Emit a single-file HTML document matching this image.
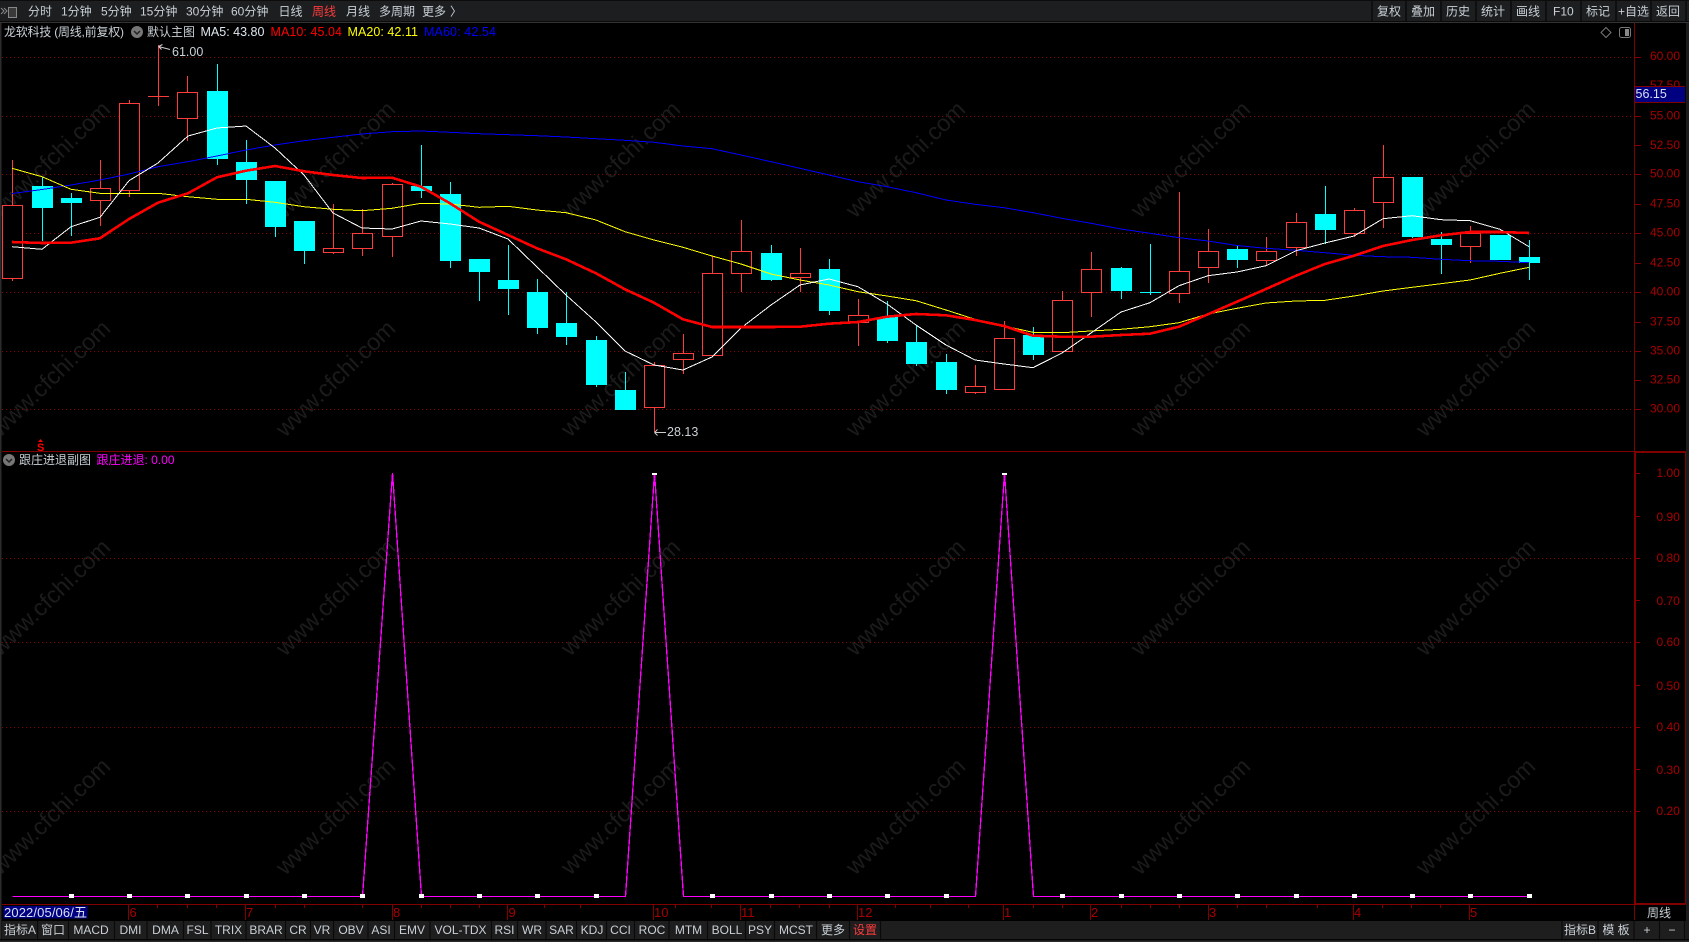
<!DOCTYPE html>
<html><head><meta charset="utf-8"><title>Chart</title>
<style>
html,body{margin:0;padding:0;background:#000;width:1689px;height:942px;overflow:hidden}
svg{position:absolute;left:0;top:0;font-family:"Liberation Sans","Noto Sans CJK SC",sans-serif;font-size:12px}
.wm text{font-size:23.5px;fill:#1b1b1b;text-anchor:middle}
.ax text{fill:#a80000}
.t text{fill:#c9d0d6}
.c text{fill:#c9d0d6;text-anchor:middle}
</style></head><body>
<svg width="1689" height="942" viewBox="0 0 1689 942" xmlns="http://www.w3.org/2000/svg">
<rect width="1689" height="942" fill="#000"/>
<g class="wm">
<text transform="translate(56,165) rotate(-44)">www.cfchi.com</text><text transform="translate(341,165) rotate(-44)">www.cfchi.com</text><text transform="translate(626,165) rotate(-44)">www.cfchi.com</text><text transform="translate(911,165) rotate(-44)">www.cfchi.com</text><text transform="translate(1196,165) rotate(-44)">www.cfchi.com</text><text transform="translate(1481,165) rotate(-44)">www.cfchi.com</text>
<text transform="translate(56,384) rotate(-44)">www.cfchi.com</text><text transform="translate(341,384) rotate(-44)">www.cfchi.com</text><text transform="translate(626,384) rotate(-44)">www.cfchi.com</text><text transform="translate(911,384) rotate(-44)">www.cfchi.com</text><text transform="translate(1196,384) rotate(-44)">www.cfchi.com</text><text transform="translate(1481,384) rotate(-44)">www.cfchi.com</text>
<text transform="translate(56,603) rotate(-44)">www.cfchi.com</text><text transform="translate(341,603) rotate(-44)">www.cfchi.com</text><text transform="translate(626,603) rotate(-44)">www.cfchi.com</text><text transform="translate(911,603) rotate(-44)">www.cfchi.com</text><text transform="translate(1196,603) rotate(-44)">www.cfchi.com</text><text transform="translate(1481,603) rotate(-44)">www.cfchi.com</text>
<text transform="translate(56,822) rotate(-44)">www.cfchi.com</text><text transform="translate(341,822) rotate(-44)">www.cfchi.com</text><text transform="translate(626,822) rotate(-44)">www.cfchi.com</text><text transform="translate(911,822) rotate(-44)">www.cfchi.com</text><text transform="translate(1196,822) rotate(-44)">www.cfchi.com</text><text transform="translate(1481,822) rotate(-44)">www.cfchi.com</text>
</g>
<!-- grid -->
<path d="M2 57.5H1634M2 116.5H1634M2 174.5H1634M2 233.5H1634M2 292.5H1634M2 351.5H1634M2 409.5H1634M2 558.5H1634M2 642.5H1634M2 727.5H1634M2 811.5H1634" stroke="#8a0000" stroke-width="1" stroke-dasharray="1 3" fill="none" shape-rendering="crispEdges"/>
<!-- cyan candles -->
<path stroke="#0ff" stroke-width="1" fill="none" shape-rendering="crispEdges" d="M42.5 177V241M71.5 193V236M217.5 64V165M246.5 140V204M275.5 181V237M304.5 221V264M421.5 145V198M450.5 182V268M479.5 259V301M508.5 245V315M537.5 279V334M566.5 292V345M596.5 336V387M625.5 372V410M771.5 245V281M829.5 259V315M887.5 301V343M916.5 325V366M946.5 354V394M1033.5 327V360M1121.5 267V299M1150.5 244V295M1140 292.5H1161M1237.5 246V268M1325.5 186V244M1412.5 177V238M1441.5 232V274M1529.5 240V280"/>
<path fill="#0ff" shape-rendering="crispEdges" d="M32 186h21v22h-21zM61 198h21v5h-21zM207 91h21v68h-21zM236 162h21v18h-21zM265 181h21v46h-21zM294 221h21v30h-21zM411 186h21v5h-21zM440 194h21v67h-21zM469 259h21v13h-21zM498 280h21v9h-21zM527 292h21v36h-21zM556 323h21v14h-21zM586 340h21v45h-21zM615 390h21v20h-21zM761 253h21v27h-21zM819 269h21v42h-21zM877 317h21v24h-21zM906 342h21v22h-21zM936 362h21v28h-21zM1023 335h21v20h-21zM1111 268h21v23h-21zM1227 249h21v11h-21zM1315 214h21v16h-21zM1402 177h21v60h-21zM1431 239h21v6h-21zM1490 235h21v25h-21zM1519 257h21v6h-21z"/>
<!-- red candles -->
<path stroke="#ff3c3c" stroke-width="1" fill="#000" shape-rendering="crispEdges" d="M12.5 160V205.5M12.5 278.5V281M2.5 205.5h20v73h-20zM100.5 160V188.5M100.5 200.5V226M90.5 188.5h20v12h-20zM129.5 100V103.5M129.5 190.5V197M119.5 103.5h20v87h-20zM158.5 45V106M148 96.5h21M187.5 76V92.5M187.5 118.5V141M177.5 92.5h20v26h-20zM333.5 204V248.5M333.5 252.5V254M323.5 248.5h20v4h-20zM362.5 209V233.5M362.5 248.5V256M352.5 233.5h20v15h-20zM392.5 183V184.5M392.5 236.5V257M382.5 184.5h20v52h-20zM654.5 362V365.5M654.5 407.5V432M644.5 365.5h20v42h-20zM683.5 334V353.5M683.5 359.5V374M673.5 353.5h20v6h-20zM712.5 256V273.5M712.5 355.5V357M702.5 273.5h20v82h-20zM741.5 220V251.5M741.5 273.5V292M731.5 251.5h20v22h-20zM800.5 248V273.5M800.5 277.5V292M790.5 273.5h20v4h-20zM858.5 299V315.5M858.5 322.5V346M848.5 315.5h20v7h-20zM975.5 365V386.5M975.5 392.5V394M965.5 386.5h20v6h-20zM1004.5 321V338.5M994.5 338.5h20v51h-20zM1062.5 291V300.5M1052.5 300.5h20v51h-20zM1091.5 252V269.5M1091.5 292.5V317M1081.5 269.5h20v23h-20zM1179.5 192V271.5M1179.5 293.5V303M1169.5 271.5h20v22h-20zM1208.5 229V251.5M1208.5 267.5V283M1198.5 251.5h20v16h-20zM1266.5 237V251.5M1266.5 260.5V265M1256.5 251.5h20v9h-20zM1296.5 213V222.5M1296.5 247.5V256M1286.5 222.5h20v25h-20zM1354.5 208V210.5M1354.5 233.5V237M1344.5 210.5h20v23h-20zM1383.5 145V177.5M1383.5 202.5V228M1373.5 177.5h20v25h-20zM1470.5 226V233.5M1470.5 246.5V263M1460.5 233.5h20v13h-20z"/>
<!-- MA60 -->
<polyline fill="none" stroke="#0000ff" stroke-width="1" shape-rendering="crispEdges" points="12,193.5 42,189.5 71,185 100,180 129,174 158,166.7 188,161.7 217,156 246,150 275,145 304,140.7 333,137.3 362,134 392,131.7 421,131 450,132.3 479,133.7 508,134.7 537,135.7 566,137 596,138.7 625,140.3 654,142.3 683,146 712,148.7 741,155 771,161.7 800,168.3 829,175 858,181.7 887,186.7 916,192.7 946,200 975,204.3 1004,207.7 1033,212.7 1062,218.3 1091,223.3 1121,229 1150,233.3 1179,237.7 1208,241 1237,245.5 1266,248.3 1296,250.3 1325,252.7 1354,255.3 1383,256.7 1412,257.3 1441,259.3 1470,260.7 1500,261.3 1529,262.7"/>
<!-- MA20 -->
<polyline fill="none" stroke="#ffff00" stroke-width="1" shape-rendering="crispEdges" points="12,168.3 42,176.7 71,189.3 100,193.3 129,193.3 158,193.3 188,196.7 217,199.3 246,199.3 275,202.3 304,206.7 333,209.3 362,210.7 392,208.3 421,203.3 450,204 479,207.3 508,206.3 537,210 566,212.7 596,220 625,231.7 654,240 683,247.3 712,256 741,264 771,274 800,280 829,285 858,291.7 887,296 916,300.7 946,310 975,319.3 1004,326 1033,332.3 1062,332.7 1091,331 1121,329.3 1150,326.7 1179,322.7 1208,314 1237,308.3 1266,303 1296,301 1325,300.3 1354,296 1383,291 1412,287.3 1441,283.7 1470,280 1500,273.3 1529,267.3"/>
<!-- MA5 -->
<polyline fill="none" stroke="#fff" stroke-width="1" shape-rendering="crispEdges" points="12,246.7 42,249.3 71,226.7 100,217.3 129,180.7 158,163 188,136 217,128 246,126 275,148 304,175 333,213 362,228 392,229 421,221 450,224 479,228 508,239 537,267 566,295 596,322 625,351 654,365 683,370 712,357 741,328 771,305 800,285 829,279 858,286.7 887,304 916,325 946,345 975,360 1004,364 1033,367.7 1062,353 1091,333 1121,312 1150,302.7 1179,285.7 1208,275.7 1237,272 1266,265.7 1296,250.7 1325,243 1354,236 1383,218.7 1412,215.7 1441,219.7 1470,220.7 1500,229.3 1529,246.7"/>
<!-- MA10 -->
<polyline fill="none" stroke="#ff0000" stroke-width="2.6" stroke-linejoin="round" shape-rendering="crispEdges" points="12,242 42,243 71,242.7 100,238.3 129,219 158,202.7 188,193.3 217,177.3 246,170.7 275,166 304,171.3 333,175 362,178 392,177.7 421,186.7 450,203.3 479,221.7 508,235 537,248.3 566,259.3 596,273.3 625,289.3 654,302.7 683,319.3 712,327 741,327 771,327 800,326.7 829,323.7 858,322 887,316.7 916,314 946,315.3 975,320 1004,326 1033,335.7 1062,336.7 1091,336.7 1121,335 1150,333.7 1179,326.7 1208,314.3 1237,301.7 1266,289 1296,275.7 1325,264 1354,255.7 1383,246 1412,240 1441,235.3 1470,232 1500,232 1529,233"/>
<!-- high/low labels -->
<path d="M158.5 46.5L170 49.5M158.5 46.5l4-2M158.5 46.5l3 3" stroke="#ccc" fill="none"/>
<text x="172" y="56" fill="#c9d0d6" font-size="12.5">61.00</text>
<path d="M654.5 432.5H666M654.5 432.5l3-3M654.5 432.5l3 3" stroke="#ccc" fill="none"/>
<text x="667" y="436" fill="#c9d0d6" font-size="12.5">28.13</text>
<path d="M40.5 439l-2.5 3h5z" fill="#f00"/>
<text x="40.7" y="451" fill="#f00" font-size="11" font-weight="bold" text-anchor="middle">S</text>
<!-- magenta -->
<path d="M12.5 896.5H362.5L392.5 473L421.5 896.5H625.5L654.5 473L683.5 896.5H975.5L1004.5 473L1033.5 896.5H1529" fill="none" stroke="#ff00ff" stroke-width="1.3" shape-rendering="crispEdges"/>
<path fill="#fff" shape-rendering="crispEdges" d="M69 894h5v4h-5zM127 894h5v4h-5zM185 894h5v4h-5zM244 894h5v4h-5zM302 894h5v4h-5zM360 894h5v4h-5zM419 894h5v4h-5zM477 894h5v4h-5zM535 894h5v4h-5zM594 894h5v4h-5zM710 894h5v4h-5zM769 894h5v4h-5zM827 894h5v4h-5zM885 894h5v4h-5zM944 894h5v4h-5zM1060 894h5v4h-5zM1119 894h5v4h-5zM1177 894h5v4h-5zM1235 894h5v4h-5zM1294 894h5v4h-5zM1352 894h5v4h-5zM1410 894h5v4h-5zM1468 894h5v4h-5zM1527 894h5v4h-5zM652 473h5v2h-5zM1002 473h5v2h-5z"/>
<!-- frame -->
<rect x="0" y="22" width="1.5" height="920" fill="#2c2c2c"/>
<rect x="1686" y="22" width="3" height="920" fill="#1c1c1c"/>
<path stroke="#800000" stroke-width="1" fill="none" shape-rendering="crispEdges" d="M1634.5 23V452M2 451.5H1686M2 904.5H1634M1634.5 904V920M1685.5 452V904"/>
<rect x="1634" y="452" width="2" height="453" fill="#800000"/>
<rect x="1634" y="451" width="52" height="2" fill="#800000"/>
<rect x="1634" y="903" width="52" height="2" fill="#800000"/>
<!-- axis ticks -->
<path stroke="#800000" fill="none" shape-rendering="crispEdges" d="M1635 57.5h6M1635 86.5h6M1635 116.5h6M1635 145.5h6M1635 174.5h6M1635 204.5h6M1635 233.5h6M1635 263.5h6M1635 292.5h6M1635 322.5h6M1635 351.5h6M1635 380.5h6M1635 409.5h6M1636 473.5h4M1636 516.5h4M1636 558.5h4M1636 600.5h4M1636 642.5h4M1636 685.5h4M1636 727.5h4M1636 769.5h4M1636 811.5h4"/>
<g class="ax">
<text x="1650" y="60">60.00</text><text x="1650" y="89">57.50</text><text x="1650" y="119.5">55.00</text><text x="1650" y="149">52.50</text><text x="1650" y="177.5">50.00</text><text x="1650" y="207.5">47.50</text><text x="1650" y="236.5">45.00</text><text x="1650" y="266.5">42.50</text><text x="1650" y="295.5">40.00</text><text x="1650" y="325.5">37.50</text><text x="1650" y="354.5">35.00</text><text x="1650" y="383.5">32.50</text><text x="1650" y="412.5">30.00</text>
<text x="1656.5" y="477">1.00</text><text x="1656.5" y="521">0.90</text><text x="1656.5" y="562">0.80</text><text x="1656.5" y="605">0.70</text><text x="1656.5" y="646">0.60</text><text x="1656.5" y="690">0.50</text><text x="1656.5" y="731">0.40</text><text x="1656.5" y="774">0.30</text><text x="1656.5" y="815">0.20</text>
</g>
<rect x="1635" y="86" width="50" height="16.5" fill="#000080"/>
<path d="M1635 86.5H1685M1635 102.5H1685" stroke="#800000" shape-rendering="crispEdges"/>
<text x="1635.5" y="98" fill="#d8e0f0" font-size="12.5">56.15</text>
<!-- legend -->
<g class="t">
<text x="4" y="36" textLength="120">龙软科技 (周线,前复权)</text>
<text x="147" y="36">默认主图</text>
<text x="19" y="464">跟庄进退副图</text>
</g>
<circle cx="137" cy="32" r="6" fill="#777"/><path d="M134 31l3 3 3-3" stroke="#222" stroke-width="1.5" fill="none"/>
<text x="200.5" y="36" fill="#dfe8ef" font-size="12.5">MA5: 43.80</text>
<text x="270.5" y="36" fill="#f00" font-size="12.5" textLength="71.5">MA10: 45.04</text>
<text x="347.5" y="36" fill="#ff0" font-size="12.5" textLength="70.5">MA20: 42.11</text>
<text x="424" y="36" fill="#00f" font-size="12.5" textLength="72">MA60: 42.54</text>
<circle cx="9" cy="460" r="6" fill="#777"/><path d="M6 459l3 3 3-3" stroke="#222" stroke-width="1.5" fill="none"/>
<text x="96.5" y="464" fill="#f0f">跟庄进退: 0.00</text>
<path d="M1606 27.5l5 5-5 5-5-5z" stroke="#777" fill="none"/>
<rect x="1619.5" y="27.5" width="11" height="10" rx="2" stroke="#777" fill="none"/><rect x="1625" y="29" width="4" height="7" fill="#888"/>
<!-- top bar -->
<rect x="0" y="0" width="1689" height="21" fill="#1c1e20"/>
<rect x="0" y="0" width="1689" height="1" fill="#0c0c0c"/>
<rect x="0" y="21" width="1689" height="1" fill="#0a0a0a"/>
<rect x="0" y="22" width="1689" height="1" fill="#333"/>
<path d="M1 8l3 3-3 3M4 8l3 3-3 3" stroke="#888" fill="none"/><rect x="8.5" y="7.5" width="8" height="10" fill="#3a3a3a" stroke="#888"/>
<g class="t">
<text x="28" y="15.5">分时</text><text x="61" y="15.5">1分钟</text><text x="101" y="15.5">5分钟</text><text x="140" y="15.5">15分钟</text><text x="186" y="15.5">30分钟</text><text x="231" y="15.5">60分钟</text><text x="278.5" y="15.5">日线</text><text x="346" y="15.5">月线</text><text x="379" y="15.5">多周期</text><text x="422" y="15.5">更多</text>
<text x="450" y="15.5">〉</text>
<text x="1377" y="15.5">复权</text><text x="1411" y="15.5">叠加</text><text x="1446" y="15.5">历史</text><text x="1481" y="15.5">统计</text><text x="1516" y="15.5">画线</text><text x="1553" y="15.5">F10</text><text x="1586" y="15.5">标记</text><text x="1618" y="15.5">+自选</text><text x="1656" y="15.5">返回</text>
</g>
<text x="312" y="15.5" fill="#ff3c3c">周线</text>
<path stroke="#0a0a0a" stroke-width="1.5" d="M1372 1V21M1406 1V21M1441 1V21M1476 1V21M1511 1V21M1546 1V21M1581 1V21M1616 1V21M1651 1V21M1686 1V21"/>
<!-- x axis -->
<rect x="3.5" y="906" width="84" height="12.5" fill="#000080"/>
<text x="4" y="917" fill="#d8e0f0" font-size="13" textLength="83">2022/05/06/五</text>
<path stroke="#800000" fill="none" shape-rendering="crispEdges" d="M128.5 905V920M245.5 905V920M392.5 905V920M507.5 905V920M653.5 905V920M740.5 905V920M857.5 905V920M1003.5 905V920M1090.5 905V920M1208.5 905V920M1353.5 905V920M1469.5 905V920M157.5 905V908M187.5 905V908M216.5 905V908M275.5 905V908M304.5 905V908M362.5 905V908M421.5 905V908M450.5 905V908M479.5 905V908M544.5 905V908M580.5 905V908M675.5 905V908M711.5 905V908M770.5 905V908M799.5 905V908M829.5 905V908M895.5 905V908M930.5 905V908M968.5 905V908M1033.5 905V908M1062.5 905V908M1121.5 905V908M1150.5 905V908M1179.5 905V908M1237.5 905V908M1266.5 905V908M1317.5 905V908M1382.5 905V908M1411.5 905V908M1440.5 905V908"/>
<g class="ax" font-size="13">
<text x="129.5" y="917">6</text><text x="246" y="917">7</text><text x="393" y="917">8</text><text x="508.5" y="917">9</text><text x="654" y="917">10</text><text x="741" y="917">11</text><text x="858" y="917">12</text><text x="1004" y="917">1</text><text x="1091" y="917">2</text><text x="1209" y="917">3</text><text x="1354" y="917">4</text><text x="1470" y="917">5</text>
</g>
<text x="1647" y="917" fill="#c9d0d6">周线</text>
<!-- bottom bar -->
<rect x="2" y="921" width="1684" height="18" fill="#1e1e1f"/>
<rect x="0" y="939" width="1689" height="1.5" fill="#050505"/>
<rect x="0" y="940.5" width="1689" height="1.5" fill="#2a2a2a"/>
<path stroke="#0a0a0a" stroke-width="1.2" d="M37.5 921V939M68.5 921V939M114.5 921V939M147 921V939M183.5 921V939M211 921V939M246 921V939M285.5 921V939M310.5 921V939M333.5 921V939M368 921V939M394.5 921V939M430 921V939M491.5 921V939M517.5 921V939M546 921V939M576.5 921V939M606.5 921V939M634.5 921V939M669 921V939M707.5 921V939M745.5 921V939M774.5 921V939M816.5 921V939M849.5 921V939M880.5 921V939M1562 921V939M1598 921V939M1634 921V939M1659.5 921V939M1684.5 921V939"/>
<g class="c">
<text x="20" y="934">指标A</text><text x="53" y="934">窗口</text><text x="91" y="934">MACD</text><text x="130.5" y="934">DMI</text><text x="165.5" y="934">DMA</text><text x="197.5" y="934">FSL</text><text x="228.5" y="934">TRIX</text><text x="266" y="934">BRAR</text><text x="298" y="934">CR</text><text x="322" y="934">VR</text><text x="351" y="934">OBV</text><text x="381" y="934">ASI</text><text x="412" y="934">EMV</text><text x="460.5" y="934">VOL-TDX</text><text x="504.5" y="934">RSI</text><text x="532" y="934">WR</text><text x="561.5" y="934">SAR</text><text x="592" y="934">KDJ</text><text x="620.5" y="934">CCI</text><text x="652" y="934">ROC</text><text x="688.5" y="934">MTM</text><text x="727" y="934">BOLL</text><text x="760" y="934">PSY</text><text x="796" y="934">MCST</text><text x="833" y="934">更多</text>
<text x="1580" y="934">指标B</text><text x="1616" y="934">模 板</text><text x="1647" y="934">+</text><text x="1672" y="934">−</text>
</g>
<text x="865" y="934" fill="#ff3c3c" text-anchor="middle">设置</text>
</svg>
</body></html>
